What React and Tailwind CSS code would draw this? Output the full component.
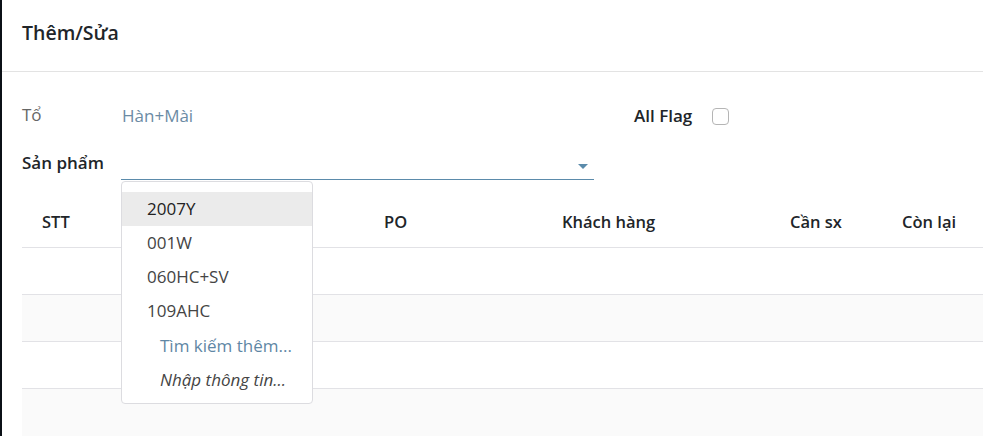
import React from "react";

const font = { fontFamily: '"Open Sans", "Noto Sans", sans-serif' };

function Row({ shaded, last }) {
  return (
    <div
      className={`h-[47px] ${last ? "" : "border-b border-[#e2e2e6]"} ${shaded ? "bg-[#fafafa]" : "bg-white"}`}
    />
  );
}

export default function App() {
  return (
    <div className="flex h-[436px] w-[983px] overflow-hidden bg-white text-[#212529]" style={font}>
      <div className="w-[2px] shrink-0 bg-[#0b1016]" />
      <div className="flex-1 flex flex-col">
        <div className="h-[72px] shrink-0 border-b border-[#e3e3e3] flex items-center pl-5">
          <h1 className="text-[19.5px] font-semibold text-[#212529] -mt-[6px]">Thêm/Sửa</h1>
        </div>
        <div className="pl-5 pt-[31px]">
          <div className="flex items-center h-[26px]">
            <span className="w-[100px] text-[17px] text-[#666] -mt-[2px]">Tổ</span>
            <span className="w-[512px] text-[17px] text-[#6b8ba4]">Hàn+Mài</span>
            <span className="text-[17px] font-semibold">All Flag</span>
            <span className="ml-[20px] w-[17px] h-[17px] rounded-[4px] border border-[#b5b5b5] bg-white" />
          </div>
          <div className="flex items-end h-[46px] mt-[5px] relative">
            <span className="w-[99px] text-[17px] font-semibold pb-[5px]">Sản phẩm</span>
            <div className="relative w-[473px] h-[46px] border-b border-[#5b8bab]">
              <svg className="absolute right-[6px] top-[30px]" width="10" height="5" viewBox="0 0 10 5">
                <path d="M0 0 L10 0 L5 5 Z" fill="#5b8bab" />
              </svg>
              <div className="absolute left-0 top-[47px] z-10 w-[192px] h-[223px] rounded-[4px] border border-[#dcdce0] bg-white pt-[10px] text-[17px]">
                <div className="h-[34px] flex items-center pl-[25px] bg-[#ebebeb] text-[#222]">2007Y</div>
                <div className="h-[34px] flex items-center pl-[25px] text-[#444]">001W</div>
                <div className="h-[34px] flex items-center pl-[25px] text-[#444]">060HC+SV</div>
                <div className="h-[34px] flex items-center pl-[25px] text-[#444]">109AHC</div>
                <div className="h-[35px] flex items-center pl-[38px] text-[#5f87a5]">Tìm kiếm thêm...</div>
                <div className="h-[34px] flex items-center pl-[38px] italic text-[#444]">Nhập thông tin...</div>
              </div>
            </div>
          </div>
          <div className="mt-[13px]">
            <div className="h-[55px] pt-[4px] border-b border-[#e2e2e6] flex items-center text-[16.5px] font-semibold">
              <div className="w-[100px] pl-5">STT</div>
              <div className="w-[242px] pl-5" />
              <div className="w-[178px] pl-5">PO</div>
              <div className="w-[228px] pl-5">Khách hàng</div>
              <div className="w-[112px] pl-5">Cần sx</div>
              <div className="flex-1 pl-5">Còn lại</div>
            </div>
            <Row />
            <Row shaded />
            <Row />
            <Row shaded last />
          </div>
        </div>
      </div>
    </div>
  );
}
